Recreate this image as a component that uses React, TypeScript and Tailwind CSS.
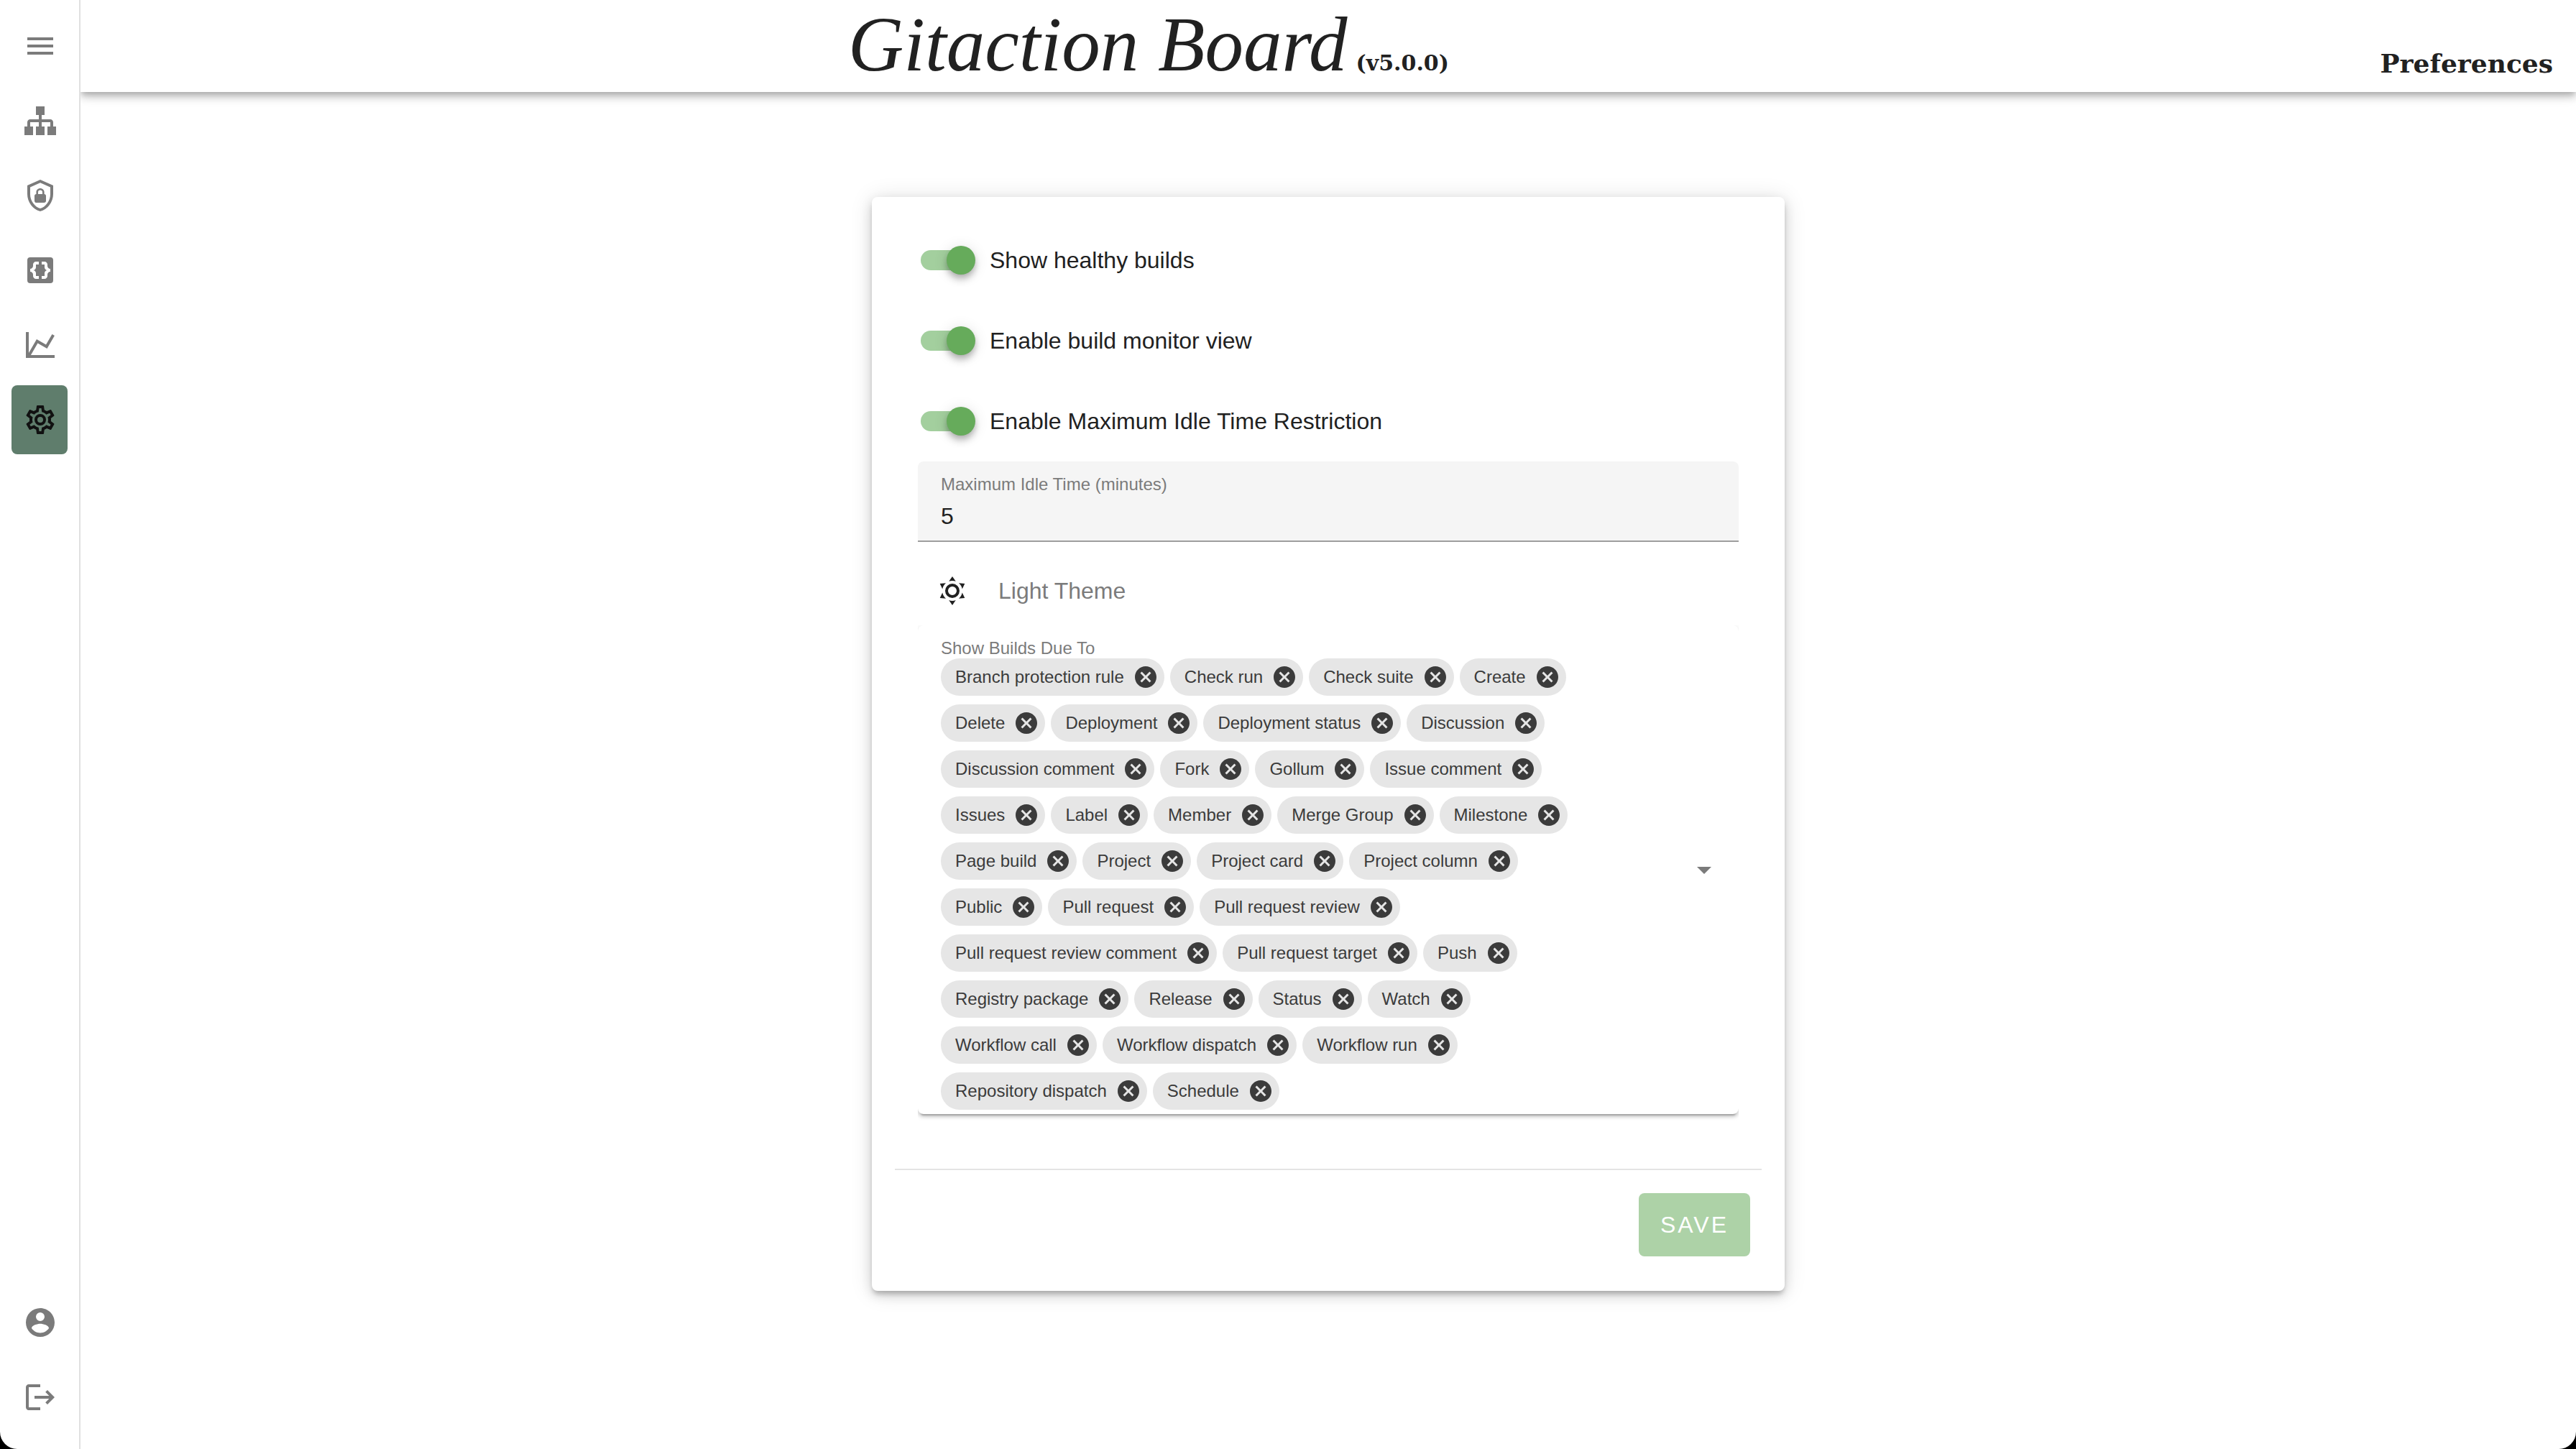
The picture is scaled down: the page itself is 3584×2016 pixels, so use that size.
import React, { useState } from "react";

const PATHS = {
  menu: "M3,6H21V8H3V6M3,11H21V13H3V11M3,16H21V18H3V16Z",
  sitemap:
    "M9,2V8H11V11H5C3.89,11 3,11.89 3,13V16H1V22H7V16H5V13H11V16H9V22H15V16H13V13H19V16H17V22H23V16H21V13C21,11.89 20.11,11 19,11H13V8H15V2H9Z",
  shieldLock:
    "M21,11C21,16.55 17.16,21.74 12,23C6.84,21.74 3,16.55 3,11V5L12,1L21,5V11M12,21C15.75,20 19,15.54 19,11.22V6.3L12,3.18L5,6.3V11.22C5,15.54 8.25,20 12,21M14.8,11V9.5C14.8,8.1 13.4,7 12,7C10.6,7 9.2,8.1 9.2,9.5V11C8.6,11 8,11.6 8,12.2V15.7C8,16.4 8.6,17 9.2,17H14.7C15.4,17 16,16.4 16,15.8V12.3C16,11.6 15.4,11 14.8,11M13.5,11H10.5V9.5C10.5,8.7 11.2,8.2 12,8.2C12.8,8.2 13.5,8.7 13.5,9.5V11Z",
  braces:
    "M19,3A2,2 0 0,1 21,5V19A2,2 0 0,1 19,21H5A2,2 0 0,1 3,19V5A2,2 0 0,1 5,3H19M11,8V6H9C7.9,6 7,6.9 7,8V9C7,10.1 6.1,11 5,11V13C6.1,13 7,13.9 7,15V16C7,17.1 7.9,18 9,18H11V16H9V14C9,12.9 8.1,12 7,12C8.1,12 9,11.1 9,10V8H11M19,13V11C17.9,11 17,10.1 17,9V8C17,6.9 16.1,6 15,6H13V8H15V10C15,11.1 15.9,12 17,12C15.9,12 15,12.9 15,14V16H13V18H15C16.1,18 17,17.1 17,16V15C17,13.9 17.9,13 19,13Z",
  chart:
    "M16,11.78L20.24,4.45L21.97,5.45L16.74,14.5L10.23,10.75L5.46,19H22V21H2V3H4V17.54L9.5,8L16,11.78Z",
  cog: "M12,8A4,4 0 0,1 16,12A4,4 0 0,1 12,16A4,4 0 0,1 8,12A4,4 0 0,1 12,8M12,10A2,2 0 0,0 10,12A2,2 0 0,0 12,14A2,2 0 0,0 14,12A2,2 0 0,0 12,10M10,22C9.75,22 9.54,21.82 9.5,21.58L9.13,18.93C8.5,18.68 7.96,18.34 7.44,17.94L4.95,18.95C4.73,19.03 4.46,18.95 4.34,18.73L2.34,15.27C2.21,15.05 2.27,14.78 2.46,14.63L4.57,12.97L4.5,12L4.57,11L2.46,9.37C2.27,9.22 2.21,8.95 2.34,8.73L4.34,5.27C4.46,5.05 4.73,4.96 4.95,5.05L7.44,6.05C7.96,5.66 8.5,5.32 9.13,5.07L9.5,2.42C9.54,2.18 9.75,2 10,2H14C14.25,2 14.46,2.18 14.5,2.42L14.87,5.07C15.5,5.32 16.04,5.66 16.56,6.05L19.05,5.05C19.27,4.96 19.54,5.05 19.66,5.27L21.66,8.73C21.79,8.95 21.73,9.22 21.54,9.37L19.43,11L19.5,12L19.43,13L21.54,14.63C21.73,14.78 21.79,15.05 21.66,15.27L19.66,18.73C19.54,18.95 19.27,19.04 19.05,18.95L16.56,17.95C16.04,18.34 15.5,18.68 14.87,18.93L14.5,21.58C14.46,21.82 14.25,22 14,22H10M11.25,4L10.88,6.61C9.68,6.86 8.62,7.5 7.85,8.39L5.44,7.35L4.69,8.65L6.8,10.2C6.4,11.37 6.4,12.64 6.8,13.8L4.68,15.36L5.43,16.66L7.86,15.62C8.63,16.5 9.68,17.14 10.87,17.38L11.24,20H12.76L13.13,17.39C14.32,17.14 15.37,16.5 16.14,15.62L18.57,16.66L19.32,15.36L17.2,13.81C17.6,12.64 17.6,11.37 17.2,10.2L19.31,8.65L18.56,7.35L16.15,8.39C15.38,7.5 14.32,6.86 13.12,6.62L12.75,4H11.25Z",
  account:
    "M12,19.2C9.5,19.2 7.29,17.92 6,16C6.03,14 10,12.9 12,12.9C14,12.9 17.97,14 18,16C16.71,17.92 14.5,19.2 12,19.2M12,5A3,3 0 0,1 15,8A3,3 0 0,1 12,11A3,3 0 0,1 9,8A3,3 0 0,1 12,5M12,2A10,10 0 0,0 2,12A10,10 0 0,0 12,22A10,10 0 0,0 22,12C22,6.47 17.5,2 12,2Z",
  logout:
    "M17 7L15.59 8.41L18.17 11H8V13H18.17L15.59 15.58L17 17L22 12M4 5H12V3H4C2.9 3 2 3.9 2 5V19C2 20.1 2.9 21 4 21H12V19H4V5Z",
  sun: "M12,7A5,5 0 0,1 17,12A5,5 0 0,1 12,17A5,5 0 0,1 7,12A5,5 0 0,1 12,7M12,9A3,3 0 0,0 9,12A3,3 0 0,0 12,15A3,3 0 0,0 15,12A3,3 0 0,0 12,9M12,2L14.39,5.42C13.65,5.15 12.84,5 12,5C11.16,5 10.35,5.15 9.61,5.42L12,2M3.34,7L7.5,6.65C6.9,7.16 6.36,7.78 5.94,8.5C5.5,9.24 5.25,10 5.11,10.79L3.34,7M3.36,17L5.12,13.23C5.26,14 5.53,14.78 5.95,15.5C6.37,16.24 6.91,16.86 7.5,17.37L3.36,17M20.65,7L18.88,10.79C18.74,10 18.47,9.23 18.05,8.5C17.63,7.78 17.1,7.15 16.5,6.64L20.65,7M20.64,17L16.5,17.36C17.09,16.85 17.62,16.22 18.04,15.5C18.46,14.77 18.73,14 18.87,13.21L20.64,17M12,22L9.59,18.56C10.33,18.83 11.14,19 12,19C12.82,19 13.63,18.83 14.37,18.56L12,22Z",
  closeCircle:
    "M12,2C17.53,2 22,6.47 22,12C22,17.53 17.53,22 12,22C6.47,22 2,17.53 2,12C2,6.47 6.47,2 12,2M15.59,7L12,10.59L8.41,7L7,8.41L10.59,12L7,15.59L8.41,17L12,13.41L15.59,17L17,15.59L13.41,12L17,8.41L15.59,7Z",
  menuDown: "M7,10L12,15L17,10H7Z",
};

function Icon({ name, className = "size-12" }: { name: keyof typeof PATHS; className?: string }) {
  return (
    <svg viewBox="0 0 24 24" fill="currentColor" aria-hidden="true" className={`shrink-0 ${className}`}>
      <path d={PATHS[name]} />
    </svg>
  );
}

function NavItem({ icon, label, active }: { icon: keyof typeof PATHS; label: string; active?: boolean }) {
  return (
    <a
      href="#"
      aria-label={label}
      aria-current={active ? "page" : undefined}
      className={`flex h-24 items-center rounded-lg pl-4 ${active ? "bg-[#5f7d6c] text-[#111111]" : "text-[#7b7b7b]"}`}
    >
      <Icon name={icon} />
    </a>
  );
}

function Sidebar() {
  return (
    <nav className="flex w-28 shrink-0 flex-col justify-between border-r-2 border-[#e0e0e0] px-4">
      <div className="flex flex-col gap-2 pt-4">
        <button type="button" aria-label="Menu" className="flex h-24 items-center pl-4 text-[#7b7b7b]">
          <Icon name="menu" />
        </button>
        <NavItem icon="sitemap" label="Workflow jobs" />
        <NavItem icon="shieldLock" label="Secrets" />
        <NavItem icon="braces" label="Code standard violations" />
        <NavItem icon="chart" label="Metrics" />
        <NavItem icon="cog" label="Preferences" active />
      </div>
      <div className="flex flex-col gap-2 pb-6">
        <NavItem icon="account" label="Account" />
        <NavItem icon="logout" label="Log out" />
      </div>
    </nav>
  );
}

function Header() {
  return (
    <header className="flex h-32 items-baseline pr-8 font-['DejaVu_Serif',serif] font-bold text-[#212121] shadow-[0_4px_8px_-2px_rgba(0,0,0,0.2),0_8px_10px_0_rgba(0,0,0,0.14),0_2px_20px_0_rgba(0,0,0,0.12)]">
      <div className="flex flex-1 items-baseline justify-center gap-3">
        <span className="font-['Liberation_Serif',serif] text-[107px] leading-[124px] font-normal italic">Gitaction Board</span>
        <span className="text-[30px]">(v5.0.0)</span>
      </div>
      <h1 className="w-[468px] self-end text-right text-[36px] leading-20">Preferences</h1>
    </header>
  );
}

function Switch({ label }: { label: string }) {
  const [on, setOn] = useState(true);
  return (
    <label className="flex h-28 cursor-pointer items-center gap-4 pl-1 text-[32px] text-[#212121]">
      <span className="relative flex h-10 w-20 shrink-0 items-center">
        <input type="checkbox" checked={on} onChange={() => setOn(!on)} className="peer sr-only" />
        <span className="h-7 w-18 rounded-full bg-gray-300 peer-checked:bg-[#a3cf9e]" />
        <span className="absolute top-0 left-0 size-10 rounded-full bg-white shadow-[0_4px_8px_-2px_rgba(0,0,0,0.2),0_8px_10px_0_rgba(0,0,0,0.14),0_2px_20px_0_rgba(0,0,0,0.12)] peer-checked:left-9 peer-checked:bg-[#66ab5b]" />
      </span>
      {label}
    </label>
  );
}

const TRIGGERS = [
  "Branch protection rule", "Check run", "Check suite", "Create", "Delete", "Deployment", "Deployment status",
  "Discussion", "Discussion comment", "Fork", "Gollum", "Issue comment", "Issues", "Label", "Member", "Merge Group",
  "Milestone", "Page build", "Project", "Project card", "Project column", "Public", "Pull request",
  "Pull request review", "Pull request review comment", "Pull request target", "Push", "Registry package", "Release",
  "Status", "Watch", "Workflow call", "Workflow dispatch", "Workflow run", "Repository dispatch", "Schedule",
];

function TriggerSelect() {
  const [items, setItems] = useState(TRIGGERS);
  return (
    <div className="[clip-path:inset(0_0_-24px_0)]">
      <div className="flex items-center rounded-lg pr-6 pl-8 shadow-[0_6px_2px_-4px_rgba(0,0,0,0.2),0_4px_4px_0_rgba(0,0,0,0.14),0_2px_10px_0_rgba(0,0,0,0.12)]">
        <div className="flex-1 pt-6 pr-24 pb-1.5">
          <div id="triggers-label" className="h-[22px] text-[24px] leading-4 whitespace-nowrap text-[#7b7b7b]">Show Builds Due To</div>
          <ul aria-labelledby="triggers-label" className="flex flex-wrap gap-x-2 gap-y-3">
            {items.map((item) => (
              <li key={item} className="flex h-[52px] items-center rounded-full bg-[#e6e6e6] pr-2 pl-5 text-[24px] text-[#3b3b3b]">
                {item}
                <button
                  type="button"
                  aria-label={`Remove ${item}`}
                  onClick={() => setItems(items.filter((i) => i !== item))}
                  className="ml-3"
                >
                  <Icon name="closeCircle" className="size-9" />
                </button>
              </li>
            ))}
          </ul>
        </div>
        <button type="button" aria-label="Open the list of triggers" className="text-[#7b7b7b]">
          <Icon name="menuDown" />
        </button>
      </div>
    </div>
  );
}

function PreferencesCard() {
  return (
    <form
      onSubmit={(e) => e.preventDefault()}
      className="w-full max-w-[1270px] rounded-lg bg-white px-8 pt-8 pb-12 shadow-[0_6px_6px_-2px_rgba(0,0,0,0.2),0_6px_16px_0_rgba(0,0,0,0.14),0_2px_32px_0_rgba(0,0,0,0.12)]"
    >
      <div className="px-8 pb-[76px]">
        <Switch label="Show healthy builds" />
        <Switch label="Enable build monitor view" />
        <Switch label="Enable Maximum Idle Time Restriction" />
        <div className="flex h-28 flex-col rounded-t-lg border-b-2 border-[#9e9e9e] bg-[#f5f5f5] px-8 pt-4">
          <label htmlFor="idle" className="text-[24px] leading-8 text-[#7b7b7b]">Maximum Idle Time (minutes)</label>
          <input id="idle" type="text" inputMode="numeric" defaultValue="5" className="w-full bg-transparent text-[32px] leading-[56px] text-[#212121] outline-none" />
        </div>
        <button type="button" className="mt-5 flex h-24 items-center gap-10 pl-6 text-[#212121]">
          <Icon name="sun" />
          <span className="text-[32px] text-[#7b7b7b]">Light Theme</span>
        </button>
        <TriggerSelect />
      </div>
      <hr className="border-t-2 border-[#e4e4e4]" />
      <div className="flex justify-end pt-8 pr-4">
        <button type="submit" className="h-22 rounded-lg bg-[#add2a7] px-[30px] text-[32px] tracking-[3px] text-white uppercase">Save</button>
      </div>
    </form>
  );
}

export default function App() {
  return (
    <div className="min-h-screen bg-black font-['Liberation_Sans',Arial,sans-serif]">
      <div className="flex min-h-screen overflow-hidden rounded-b-3xl bg-white">
        <Sidebar />
        <div className="flex flex-1 flex-col overflow-hidden">
          <Header />
          <main className="flex flex-1 flex-col items-center px-8 pt-[146px]">
            <PreferencesCard />
          </main>
        </div>
      </div>
    </div>
  );
}
